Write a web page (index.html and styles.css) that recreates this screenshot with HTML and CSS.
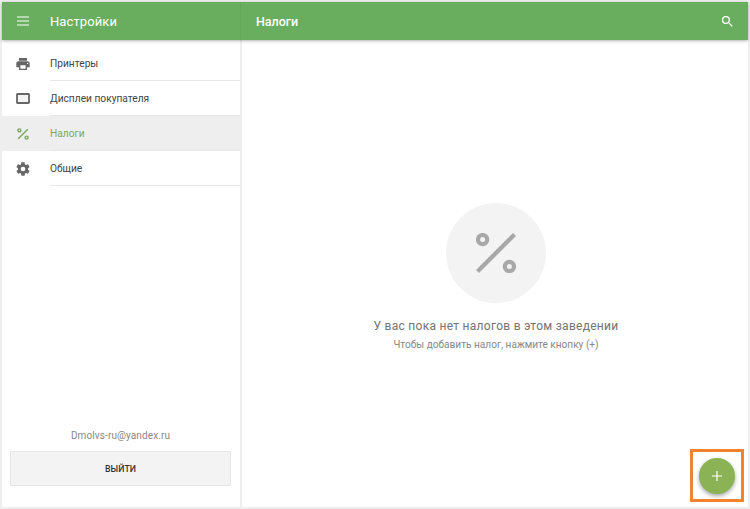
FILE: index.html
```html
<!DOCTYPE html>
<html lang="ru">
<head>
<meta charset="utf-8">
<title>Настройки</title>
<link rel="stylesheet" href="styles.css">
</head>
<body>
<div class="app">
  <header class="topbar">
    <div class="topbar-left">
      <svg class="menu-icon" viewBox="0 0 12 10" width="12" height="10"><path d="M0 1h12M0 5h12M0 9h12" stroke="#fff" stroke-width="1.2" fill="none"/></svg>
      <span class="topbar-title">Настройки</span>
    </div>
    <div class="topbar-right">
      <span class="page-title">Налоги</span>
      <svg class="search-icon" viewBox="0 0 24 24" width="15" height="15"><path fill="#fff" d="M15.5 14h-.79l-.28-.27A6.47 6.47 0 0 0 16 9.5 6.5 6.5 0 1 0 9.5 16c1.61 0 3.09-.59 4.23-1.57l.27.28v.79l5 4.99L20.49 19l-4.99-5zm-6 0C7.01 14 5 11.99 5 9.5S7.01 5 9.5 5 14 7.01 14 9.5 11.99 14 9.5 14z"/></svg>
    </div>
  </header>
  <div class="content">
    <aside class="sidebar">
      <nav class="nav">
        <a class="nav-item">
          <span class="nav-icon"><svg viewBox="0 0 24 24" width="16" height="16"><path fill="#666" d="M19 8H5c-1.66 0-3 1.34-3 3v6h4v4h12v-4h4v-6c0-1.66-1.34-3-3-3zm-3 11H8v-5h8v5zm3-7c-.55 0-1-.45-1-1s.45-1 1-1 1 .45 1 1-.45 1-1 1zm-1-9H6v4h12V3z"/></svg></span>
          <span class="nav-label">Принтеры</span>
        </a>
        <a class="nav-item">
          <span class="nav-icon"><svg viewBox="0 0 14 11" width="14" height="11"><rect x="1" y="1" width="12" height="9" rx="0.5" fill="#f4f4f4" stroke="#666" stroke-width="1.8"/></svg></span>
          <span class="nav-label">Дисплеи покупателя</span>
        </a>
        <a class="nav-item active">
          <span class="nav-icon"><svg viewBox="0 0 12 12" width="12" height="12"><g fill="none" stroke="#7aa95c" stroke-width="1.4"><circle cx="2.4" cy="2.4" r="1.5"/><circle cx="9.6" cy="9.6" r="1.5"/><path d="M1.2 10.8 10.8 1.2"/></g></svg></span>
          <span class="nav-label">Налоги</span>
        </a>
        <a class="nav-item">
          <span class="nav-icon"><svg viewBox="0 0 24 24" width="16" height="16"><path fill="#666" d="M19.43 12.98c.04-.32.07-.64.07-.98s-.03-.66-.07-.98l2.11-1.65c.19-.15.24-.42.12-.64l-2-3.46c-.12-.22-.39-.3-.61-.22l-2.49 1c-.52-.4-1.08-.73-1.69-.98l-.38-2.65A.49.49 0 0 0 14 2h-4c-.25 0-.46.18-.49.42l-.38 2.65c-.61.25-1.17.59-1.69.98l-2.49-1a.49.49 0 0 0-.61.22l-2 3.46c-.13.22-.07.49.12.64l2.11 1.65c-.04.32-.07.65-.07.98s.03.66.07.98l-2.11 1.65c-.19.15-.24.42-.12.64l2 3.46c.12.22.39.3.61.22l2.49-1c.52.4 1.08.73 1.69.98l.38 2.65c.03.24.24.42.49.42h4c.25 0 .46-.18.49-.42l.38-2.65c.61-.25 1.17-.59 1.69-.98l2.49 1c.23.09.49 0 .61-.22l2-3.46c.12-.22.07-.49-.12-.64l-2.11-1.65zM12 15.5a3.5 3.5 0 1 1 0-7 3.5 3.5 0 0 1 0 7z"/></svg></span>
          <span class="nav-label">Общие</span>
        </a>
      </nav>
      <div class="account">
        <div class="email">Dmolvs-ru@yandex.ru</div>
        <button class="logout">ВЫЙТИ</button>
      </div>
    </aside>
    <main class="main">
      <div class="empty">
        <div class="empty-circle">
          <svg viewBox="0 0 40 40" width="40" height="40"><g fill="none" stroke="#a8a8a8" stroke-width="4.2"><circle cx="6.6" cy="6.6" r="4.6"/><circle cx="33.4" cy="33.4" r="4.6"/><path d="M1.5 38.5 38.5 1.5"/></g></svg>
        </div>
        <div class="empty-title">У вас пока нет налогов в этом заведении</div>
        <div class="empty-sub">Чтобы добавить налог, нажмите кнопку (+)</div>
      </div>
    </main>
  </div>
  <div class="fab-highlight">
    <button class="fab"><svg viewBox="0 0 12 12" width="12" height="12"><path d="M6 1v10M1 6h10" stroke="#fff" stroke-width="1.2" fill="none"/></svg></button>
  </div>
</div>
</body>
</html>
```
FILE: styles.css
```css
* { box-sizing: border-box; }
html, body { margin: 0; height: 100%; }
body { background: #eeeeee; font-family: Roboto, "Liberation Sans", sans-serif; overflow: hidden; }
.app { position: relative; width: 750px; height: 509px; padding: 2px; display: flex; flex-direction: column; }
.topbar { height: 38px; flex: none; width: 746px; background: #69ae5e; color: #fff; display: flex; box-shadow: 0 1px 3px rgba(0,0,0,.3); position: relative; z-index: 1; }
.topbar-left { width: 239px; display: flex; align-items: center; padding-left: 15px; border-right: 1px solid #62a657; }
.menu-icon { margin-right: 21px; }
.topbar-title { font-size: 13px; font-weight: 400; letter-spacing: .1px; }
.topbar-right { flex: 1; display: flex; align-items: center; justify-content: space-between; padding: 0 13px 0 15px; }
.page-title { font-size: 12.5px; font-weight: 500; }
.content { flex: 1; display: flex; min-height: 0; width: 746px; }
.sidebar { width: 238px; background: #fff; display: flex; flex-direction: column; justify-content: space-between; }
.nav { display: flex; flex-direction: column; padding-top: 6px; }
.nav-item { height: 35px; display: flex; align-items: center; color: #444; font-size: 10.2px; }
.nav-icon { width: 48px; flex: none; height: 100%; display: flex; align-items: center; justify-content: center; padding-right: 6px; }
.nav-label { flex: 1; height: 100%; display: flex; align-items: center; border-bottom: 1px solid #e8e8e8; }
.nav-item.active { background: #eeeeee; color: #7aa95c; }
.account { padding: 0 9px 21px 8px; display: flex; flex-direction: column; align-items: stretch; }
.email { text-align: center; font-size: 10px; color: #888; margin-bottom: 10px; letter-spacing: .1px; }
.logout { height: 35px; background: #f3f3f3; border: 1px solid #e6e6e6; border-radius: 1px; font: 500 8.8px Roboto, "Liberation Sans", sans-serif; color: #333; padding: 0; }
.main { flex: 1; margin-left: 2px; background: #fff; display: flex; justify-content: center; padding-left: 2px; }
.empty { display: flex; flex-direction: column; align-items: center; padding-top: 163px; }
.empty-circle { width: 100px; height: 100px; border-radius: 50%; background: #f3f3f3; display: flex; align-items: center; justify-content: center; }
.empty-title { margin-top: 16px; font-size: 12px; color: #737373; letter-spacing: .28px; }
.empty-sub { margin-top: 6px; font-size: 10.1px; color: #888; }
.fab-highlight { position: absolute; left: 690px; top: 449px; width: 54px; height: 53px; border: 3px solid #f5822f; display: flex; align-items: center; justify-content: center; }
.fab { width: 36px; height: 36px; border-radius: 50%; border: 0; padding: 0; background: #8bb254; box-shadow: 0 2px 4px rgba(0,0,0,.35); display: flex; align-items: center; justify-content: center; }
```
